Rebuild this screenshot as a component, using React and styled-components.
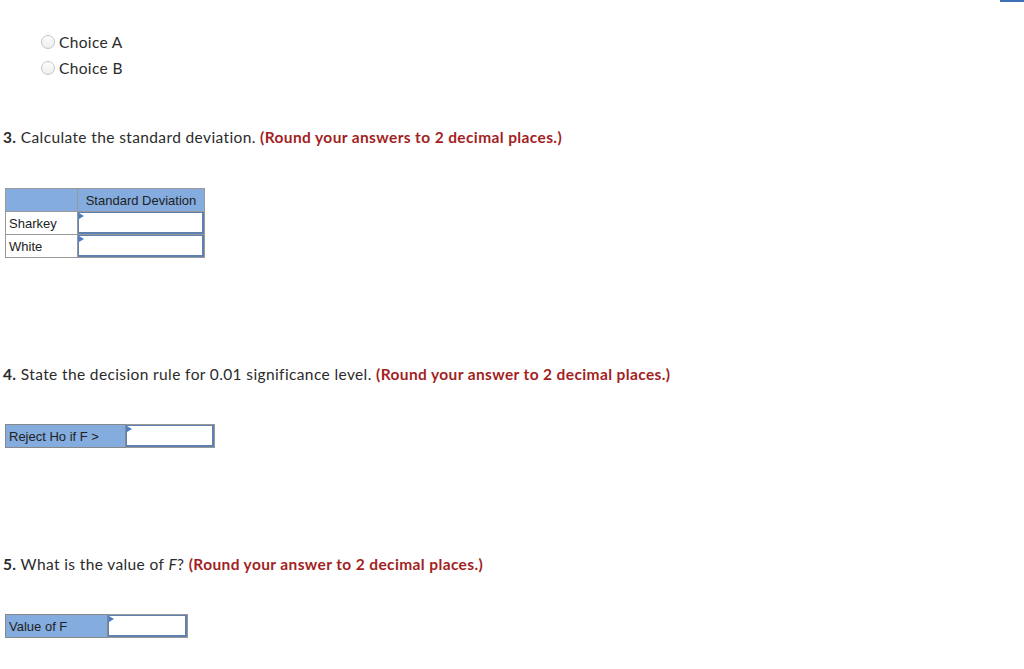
import styled, { createGlobalStyle } from 'styled-components';

const GlobalStyle = createGlobalStyle`
  body {
    margin: 0;
    background: #fff;
    font-family: Lato, "Open Sans", sans-serif;
    color: #2b2b2b;
  }
`;

const Page = styled.div`
  position: relative;
  width: 1024px;
  height: 669px;
  overflow: hidden;
  padding-left: 3px;
  box-sizing: border-box;
`;

const CornerBar = styled.div`
  position: absolute;
  top: 0;
  right: 0;
  width: 24px;
  height: 2px;
  background: #3f6fb6;
`;

const Choices = styled.div`
  display: flex;
  flex-direction: column;
  gap: 8px;
  padding-top: 33px;
  padding-left: 38px;
`;

const Choice = styled.label`
  display: flex;
  align-items: center;
  gap: 4px;
  font-size: 15.5px;
  letter-spacing: 0.35px;
  height: 18px;
  color: #2b2b2b;
`;

const Radio = styled.span`
  width: 14px;
  height: 14px;
  border-radius: 50%;
  border: 1px solid #c4c4c4;
  background: linear-gradient(#fdfdfd, #eeeeee);
  box-sizing: border-box;
`;

const Question = styled.p`
  margin: ${(p) => p.$top}px 0 0;
  font-size: 15.5px;
  letter-spacing: 0.38px;
  line-height: 18px;
  color: #2b2b2b;

  b {
    font-weight: 700;
  }

  em {
    font-style: italic;
  }
`;

const Hint = styled.span`
  color: #a31f1f;
  font-weight: 700;
`;

const Table = styled.table`
  margin: ${(p) => p.$top}px 0 0 2px;
  border-collapse: collapse;
  table-layout: fixed;
  font-family: "Liberation Sans", Arial, sans-serif;
  font-size: 13px;
  color: #222;
`;

const HeadCell = styled.td`
  background: #84acdf;
  border: 1px solid #999;
  height: 23px;
  padding: 0;
  width: ${(p) => p.$w}px;
  box-sizing: border-box;
  text-align: center;
  white-space: nowrap;
`;

const LabelCell = styled.td`
  border: 1px solid #999;
  height: 23px;
  padding: 0 3px;
  width: ${(p) => p.$w}px;
  box-sizing: border-box;
  white-space: nowrap;
  background: ${(p) => (p.$blue ? '#84acdf' : '#fff')};
  ${(p) => p.$blue && 'border-color: #888;'}
`;

const InputCell = styled.td`
  border: 1px solid #999;
  padding: 0;
  width: ${(p) => p.$w}px;
  height: 23px;
  box-sizing: border-box;
`;

const AnswerBox = styled.div`
  position: relative;
  height: 22px;
  border: 2px solid #5f7fae;
  border-top-width: 1px;
  border-left-width: 1px;
  box-sizing: border-box;
  background: #fff;

  &::before {
    content: '';
    position: absolute;
    left: 0;
    top: 0;
    border-left: 5px solid #4a7fc8;
    border-top: 3px solid transparent;
    border-bottom: 3px solid transparent;
  }
`;

function AnswerRow({ label, labelW, inputW, top }) {
  return (
    <Table $top={top}>
      <tbody>
        <tr>
          <LabelCell $blue $w={labelW}>{label}</LabelCell>
          <InputCell $w={inputW}>
            <AnswerBox />
          </InputCell>
        </tr>
      </tbody>
    </Table>
  );
}

export default function App() {
  return (
    <Page>
      <GlobalStyle />
      <CornerBar />
      <Choices>
        <Choice>
          <Radio />
          Choice A
        </Choice>
        <Choice>
          <Radio />
          Choice B
        </Choice>
      </Choices>

      <Question $top={51}>
        <b>3.</b> Calculate the standard deviation. <Hint>(Round your answers to 2 decimal places.)</Hint>
      </Question>

      <Table $top={42}>
        <tbody>
          <tr>
            <HeadCell $w={72} />
            <HeadCell $w={127}>Standard Deviation</HeadCell>
          </tr>
          <tr>
            <LabelCell $w={72}>Sharkey</LabelCell>
            <InputCell $w={127}>
              <AnswerBox />
            </InputCell>
          </tr>
          <tr>
            <LabelCell $w={72}>White</LabelCell>
            <InputCell $w={127}>
              <AnswerBox />
            </InputCell>
          </tr>
        </tbody>
      </Table>

      <Question $top={107}>
        <b>4.</b> State the decision rule for 0.01 significance level. <Hint>(Round your answer to 2 decimal places.)</Hint>
      </Question>

      <AnswerRow label="Reject Ho if F >" labelW={120} inputW={89} top={41} />

      <Question $top={107}>
        <b>5.</b> What is the value of <em>F</em>? <Hint>(Round your answer to 2 decimal places.)</Hint>
      </Question>

      <AnswerRow label="Value of F" labelW={102} inputW={80} top={41} />
    </Page>
  );
}
